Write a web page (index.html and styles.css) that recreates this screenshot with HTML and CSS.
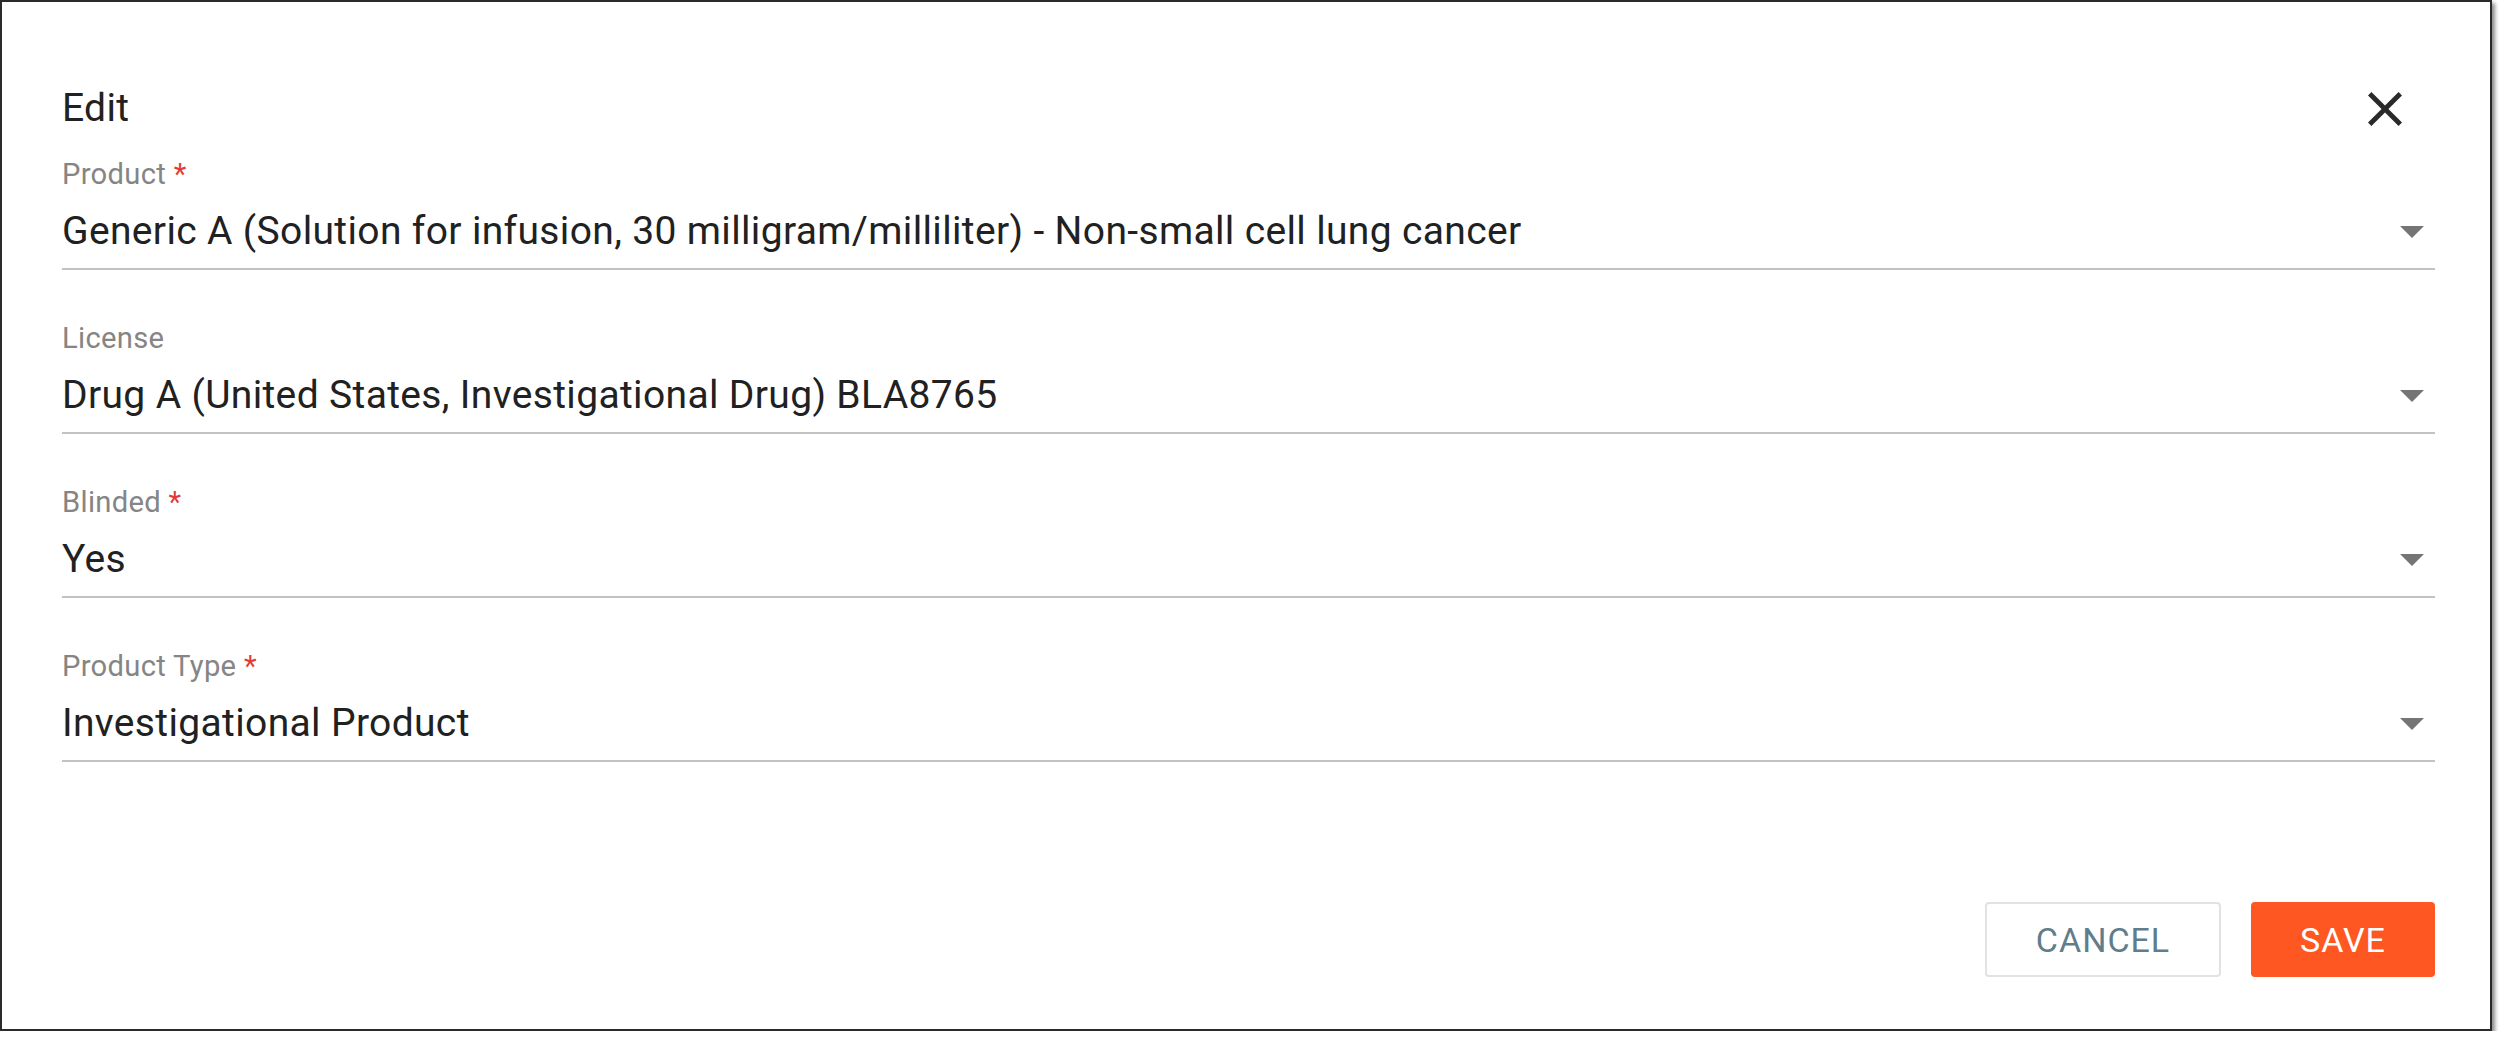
FILE: index.html
```html
<!DOCTYPE html>
<html lang="en">
<head>
<meta charset="utf-8">
<title>Edit</title>
<link rel="stylesheet" href="styles.css">
</head>
<body>
<div class="dialog">
  <div class="header">
    <h1 class="title">Edit</h1>
    <svg class="close" viewBox="5 5 14 14" aria-label="Close"><path d="M19 6.41L17.59 5 12 10.59 6.41 5 5 6.41 10.59 12 5 17.59 6.41 19 12 13.41 17.59 19 19 17.59 13.41 12z"/></svg>
  </div>
  <div class="form">
    <div class="field">
      <div class="label">Product <span class="req">*</span></div>
      <div class="control">
        <span class="value">Generic A (Solution for infusion, 30 milligram/milliliter) - Non-small cell lung cancer</span>
        <svg class="arrow" viewBox="7 10 10 5"><path d="M7 10l5 5 5-5z"/></svg>
      </div>
    </div>
    <div class="field">
      <div class="label">License</div>
      <div class="control">
        <span class="value">Drug A (United States, Investigational Drug) BLA8765</span>
        <svg class="arrow" viewBox="7 10 10 5"><path d="M7 10l5 5 5-5z"/></svg>
      </div>
    </div>
    <div class="field">
      <div class="label">Blinded <span class="req">*</span></div>
      <div class="control">
        <span class="value">Yes</span>
        <svg class="arrow" viewBox="7 10 10 5"><path d="M7 10l5 5 5-5z"/></svg>
      </div>
    </div>
    <div class="field">
      <div class="label">Product Type <span class="req">*</span></div>
      <div class="control">
        <span class="value">Investigational Product</span>
        <svg class="arrow" viewBox="7 10 10 5"><path d="M7 10l5 5 5-5z"/></svg>
      </div>
    </div>
  </div>
  <div class="footer">
    <button class="btn btn-cancel">CANCEL</button>
    <button class="btn btn-save">SAVE</button>
  </div>
</div>
</body>
</html>
```

FILE: styles.css
```css
html, body {
  margin: 0;
  padding: 0;
  background: #ffffff;
}

body {
  font-family: Roboto, "Liberation Sans", Arial, sans-serif;
  color: #212121;
}

.dialog {
  box-sizing: border-box;
  width: 2492px;
  height: 1031px;
  border: 2px solid #2b2b2b;
  box-shadow: 3px 3px 4px rgba(0, 0, 0, 0.45);
  background: #ffffff;
  padding: 84px 55px 52px 60px;
  display: flex;
  flex-direction: column;
}

.header {
  display: flex;
  align-items: center;
  justify-content: space-between;
  height: 45px;
}

.title {
  margin: 0;
  font-size: 39px;
  line-height: 45px;
  font-weight: 400;
  letter-spacing: 0.3px;
  color: #212121;
}

.close {
  width: 34px;
  height: 34px;
  margin-right: 33px;
  fill: #2a2a2a;
}

.form {
  margin-top: 26px;
  display: flex;
  flex-direction: column;
}

.field {
  display: flex;
  flex-direction: column;
  margin-bottom: 51px;
}

.label {
  font-size: 29.2px;
  line-height: 34px;
  letter-spacing: 0.3px;
  color: #858585;
}

.req {
  color: #e53935;
}

.control {
  margin-top: 18px;
  display: flex;
  align-items: center;
  justify-content: space-between;
  padding-bottom: 14px;
  border-bottom: 2px solid #c2c2c2;
}

.value {
  font-size: 39px;
  line-height: 45px;
  letter-spacing: 0.35px;
  color: #212121;
}

.arrow {
  width: 24px;
  height: 12px;
  margin-right: 11px;
  fill: #757575;
}

.footer {
  margin-top: auto;
  display: flex;
  justify-content: flex-end;
  gap: 30px;
}

.btn {
  box-sizing: border-box;
  height: 75px;
  padding: 0;
  border-radius: 4px;
  font-family: Roboto, "Liberation Sans", Arial, sans-serif;
  font-size: 34px;
  letter-spacing: 1px;
  font-weight: 400;
  cursor: pointer;
}

.btn-cancel {
  width: 236px;
  background: #ffffff;
  border: 2px solid #e2e2e2;
  color: #5f7d8b;
}

.btn-save {
  width: 184px;
  background: #ff5722;
  border: 2px solid #ff5722;
  color: #ffffff;
}
```
